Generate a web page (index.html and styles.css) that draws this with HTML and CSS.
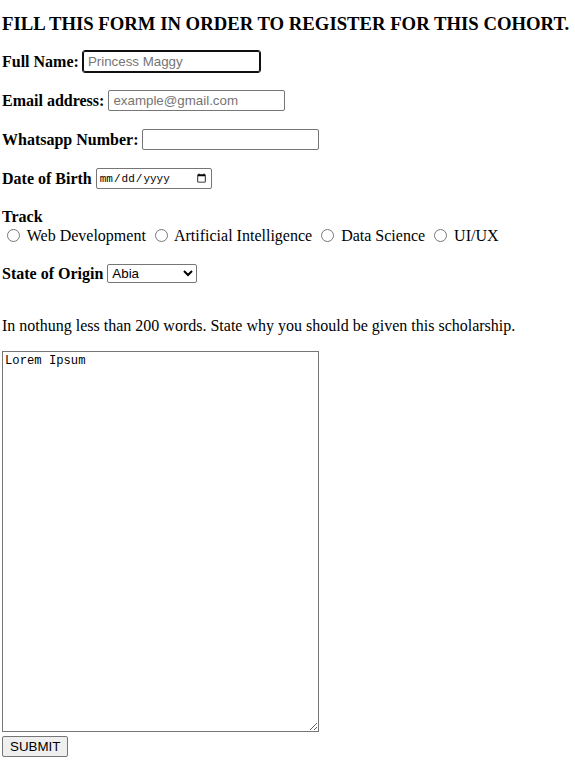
FILE: index.html
```html
<!DOCTYPE html>
<html>
<head>
<meta charset="utf-8">
<link rel="stylesheet" href="styles.css">
</head>
<body>
<h3 class="title">FILL THIS FORM IN ORDER TO REGISTER FOR THIS COHORT.</h3>
<form class="form">
  <div class="row"><label class="lbl" for="fn">Full Name:</label><input class="field focused" id="fn" type="text" placeholder="Princess Maggy"></div>
  <div class="row"><label class="lbl" for="em">Email address:</label><input class="field" id="em" type="email" placeholder="example@gmail.com"></div>
  <div class="row"><label class="lbl" for="wa">Whatsapp Number:</label><input class="field" id="wa" type="tel"></div>
  <div class="row"><label class="lbl" for="dob">Date of Birth</label><input class="date" id="dob" type="date"></div>
  <div class="track">
    <div class="lbl">Track</div>
    <div class="radios"><input class="radio" type="radio" name="t" id="r1"> <label for="r1">Web Development</label> <input class="radio" type="radio" name="t" id="r2"> <label for="r2">Artificial Intelligence</label> <input class="radio" type="radio" name="t" id="r3"> <label for="r3">Data Science</label> <input class="radio" type="radio" name="t" id="r4"> <label for="r4">UI/UX</label></div>
  </div>
  <div class="row"><label class="lbl" for="so">State of Origin</label><select class="select" id="so"><option>Abia</option></select></div>
  <p class="prompt">In nothung less than 200 words. State why you should be given this scholarship.</p>
  <textarea class="essay">Lorem Ipsum</textarea>
  <div><button class="submit" type="submit">SUBMIT</button></div>
</form>
</body>
</html>
```

FILE: styles.css
```css
html, body {
  background: #fff;
}
body {
  margin: 0;
  padding: 0 2px;
  font-family: "Liberation Serif", "Times New Roman", serif;
  font-size: 16px;
  color: #000;
}
.title {
  font-size: 18.72px;
  font-weight: bold;
  margin: 13px 0 0 0;
  line-height: 22px;
}
.form {
  margin-top: 16px;
}
.row {
  display: flex;
  align-items: center;
  height: 21px;
  margin-bottom: 18px;
}
.lbl {
  font-weight: bold;
}
.field {
  box-sizing: border-box;
  width: 177px;
  height: 21px;
  margin: 0 0 0 4px;
  padding: 1px 4px;
  border: 1px solid #767676;
  border-radius: 2px;
  font-family: "Liberation Sans", Arial, sans-serif;
  font-size: 13.33px;
}
.field::placeholder {
  color: #757575;
}
.focused {
  outline: 1px solid #101010;
  outline-offset: 0;
  border-color: #101010;
}
.date {
  box-sizing: border-box;
  width: 116px;
  height: 21px;
  margin: 0 0 0 4px;
  padding: 1px 2px;
  border: 1px solid #767676;
  border-radius: 2px;
  font-family: "Liberation Mono", monospace;
  font-size: 11px;
}
.track {
  padding-top: 1px;
  margin-bottom: 17px;
}
.track .lbl {
  line-height: 18px;
}
.radios {
  line-height: 20px;
  height: 20px;
}
.radio {
  margin: 3px 3px 0 5px;
  width: 13px;
  height: 13px;
  vertical-align: -1px;
}
.select {
  box-sizing: border-box;
  width: 90px;
  height: 19px;
  margin: 0 0 0 4px;
  padding: 0;
  border: 1px solid #767676;
  border-radius: 2px;
  font-family: "Liberation Sans", Arial, sans-serif;
  font-size: 13.33px;
  background: #fff;
}
.prompt {
  margin: 33px 0 16px 0;
  line-height: 18px;
}
.essay {
  box-sizing: border-box;
  display: block;
  width: 317px;
  height: 381px;
  margin: 0;
  padding: 2px;
  border: 1px solid #767676;
  font-family: "Liberation Mono", Consolas, monospace;
  font-size: 12.2px;
  resize: both;
}
.submit {
  box-sizing: border-box;
  margin: 4px 0 0 0;
  height: 21px;
  padding: 1px 7px;
  border: 1px solid #767676;
  border-radius: 2px;
  background: #efefef;
  font-family: "Liberation Sans", Arial, sans-serif;
  font-size: 13.33px;
  color: #000;
}
```
